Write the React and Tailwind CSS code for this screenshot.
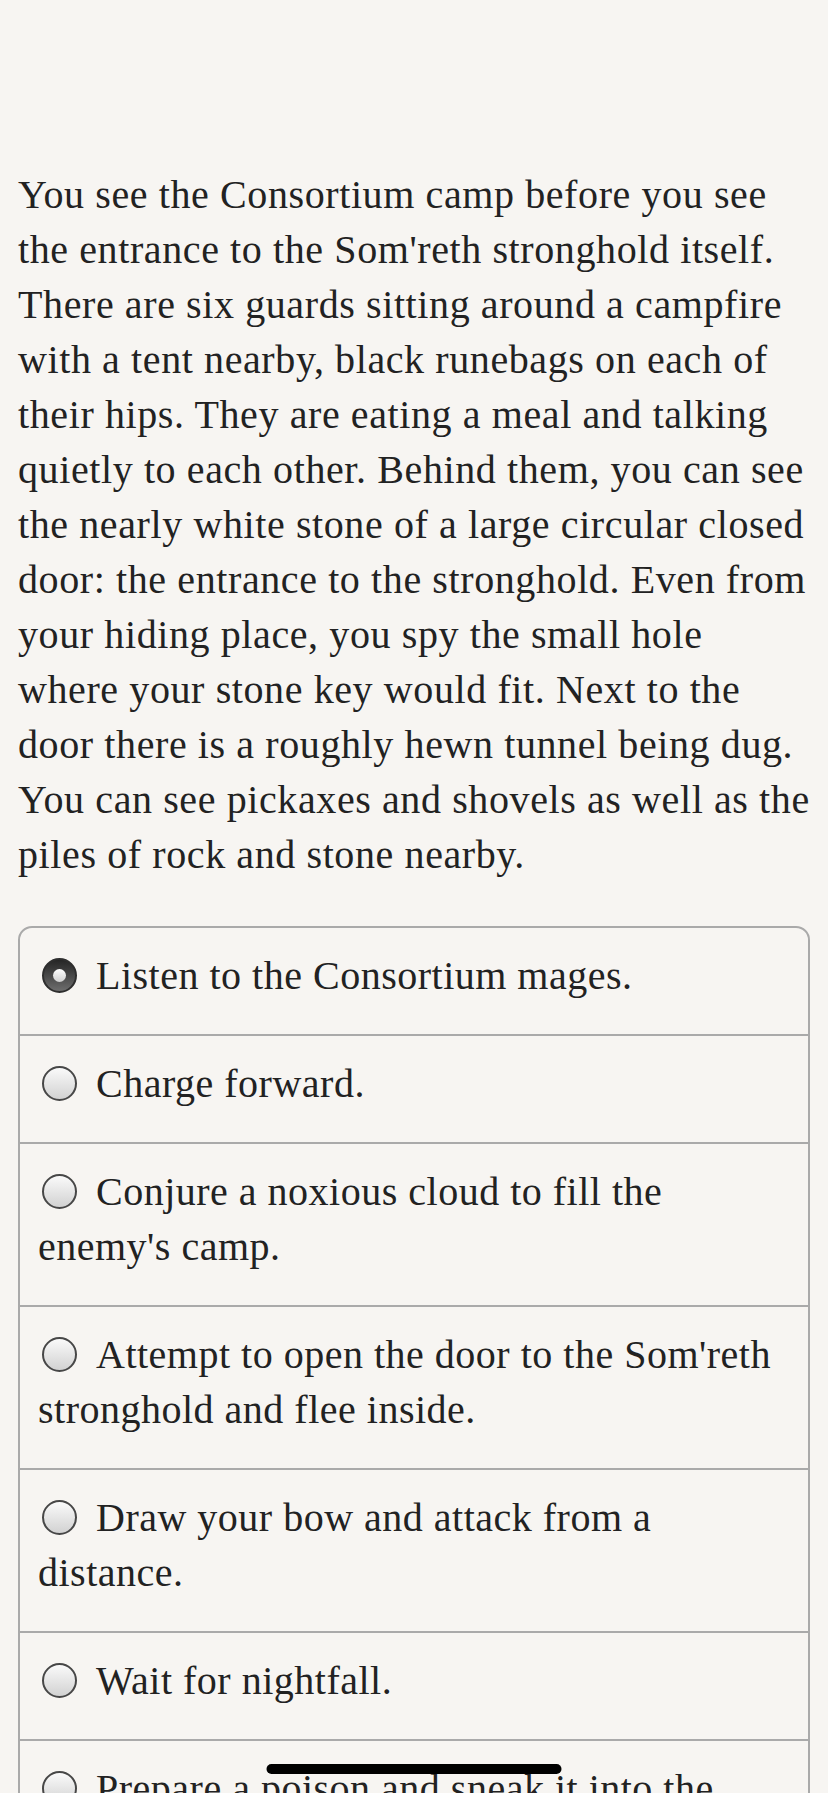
import React, { useState } from "react";

const passage =
  "You see the Consortium camp before you see the entrance to the Som'reth stronghold itself. There are six guards sitting around a campfire with a tent nearby, black runebags on each of their hips. They are eating a meal and talking quietly to each other. Behind them, you can see the nearly white stone of a large circular closed door: the entrance to the stronghold. Even from your hiding place, you spy the small hole where your stone key would fit. Next to the door there is a roughly hewn tunnel being dug. You can see pickaxes and shovels as well as the piles of rock and stone nearby.";

const choices = [
  "Listen to the Consortium mages.",
  "Charge forward.",
  "Conjure a noxious cloud to fill the enemy's camp.",
  "Attempt to open the door to the Som'reth stronghold and flee inside.",
  "Draw your bow and attack from a distance.",
  "Wait for nightfall.",
  "Prepare a poison and sneak it into the enemy's food.",
];

const Radio = ({ checked }) =>
  checked ? (
    <span className="inline-block w-[35px] h-[35px] rounded-full bg-gradient-to-b from-[#262626] to-[#6e6e6e] border-2 border-[#2e2e2e] ml-[4px] mr-[19px] align-[-4px]">
      <span className="block w-[13px] h-[13px] mx-auto mt-[9px] rounded-full bg-gradient-to-b from-[#ffffff] to-[#d0d0d0]" />
    </span>
  ) : (
    <span className="inline-block w-[35px] h-[35px] rounded-full bg-gradient-to-b from-[#fafafa] to-[#d2d2d2] border-[2.5px] border-[#474747] ml-[4px] mr-[19px] align-[-4px]" />
  );

export default function App() {
  const [selected, setSelected] = useState(0);

  return (
    <div
      className="min-h-screen bg-[#f7f5f2] text-[#222] px-[18px] pt-[167px] pb-[40px]"
      style={{ fontFamily: '"Liberation Serif", serif' }}
    >
      <p className="text-[40px] leading-[55px] tracking-[0.6px]">{passage}</p>

      <div className="mt-[44px] border-2 border-[#aaa] rounded-[14px] overflow-hidden">
        {choices.map((choice, i) => (
          <div
            key={i}
            onClick={() => setSelected(i)}
            className="pl-[18px] pr-[16px] pt-[20px] pb-[31px] border-b-2 border-[#aaa] last:border-b-0 text-[40px] leading-[55px] tracking-[0.5px] cursor-pointer"
          >
            <Radio checked={selected === i} />
            {choice}
          </div>
        ))}
      </div>

      <div className="fixed bottom-[19px] left-1/2 -translate-x-1/2 w-[295px] h-[10px] rounded-full bg-black" />
    </div>
  );
}
